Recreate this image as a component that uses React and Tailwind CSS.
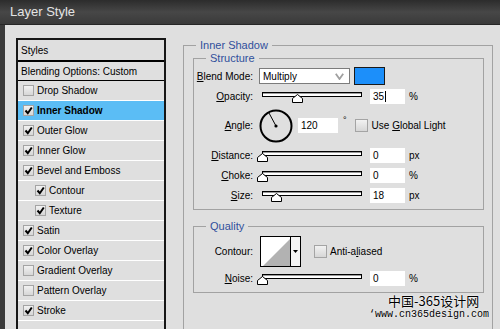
import React from "react";

const styleItems = [
  { label: "Drop Shadow", checked: false },
  { label: "Inner Shadow", checked: true, active: true },
  { label: "Outer Glow", checked: true },
  { label: "Inner Glow", checked: true },
  { label: "Bevel and Emboss", checked: true },
  { label: "Contour", checked: true, nested: true },
  { label: "Texture", checked: true, nested: true },
  { label: "Satin", checked: true },
  { label: "Color Overlay", checked: true },
  { label: "Gradient Overlay", checked: false },
  { label: "Pattern Overlay", checked: false },
  { label: "Stroke", checked: true },
];

const Check = ({ checked, size = "w-[11px] h-[11px]" }) => (
  <div
    className={`${size} shrink-0 border border-[#a4a4a4] bg-linear-to-b from-[#f2f2f2] to-[#d6d6d6] flex items-center justify-center`}
  >
    {checked && (
      <svg width="9" height="9" viewBox="0 0 9 9">
        <path d="M1.5 4.5 L3.8 7.2 L7.8 1.5" fill="none" stroke="#000" strokeWidth="2" />
      </svg>
    )}
  </div>
);

const Thumb = () => (
  <svg width="11" height="9" viewBox="0 0 11 9">
    <polygon points="5.5,0.5 10.5,4.5 10.5,8.5 0.5,8.5 0.5,4.5" fill="#fff" stroke="#000" strokeWidth="1" />
  </svg>
);

// pos = thumb centre, px from track start
function Slider({ pos }) {
  return (
    <div className="relative w-[108px] h-[14px] shrink-0">
      <div className="absolute left-[4px] top-[3px] w-[100px] h-[5px] border border-black bg-white shadow-[inset_0_1px_0_#9a9a9a]" />
      <div className="absolute top-[5px] flex" style={{ left: 4 + pos - 5 }}>
        <Thumb />
      </div>
    </div>
  );
}

const Field = ({ children, w = "w-[35px]", caret }) => (
  <div className={`${w} h-[15px] bg-white pl-[3px] text-[10px] leading-[15px] shrink-0 flex items-center`}>
    {children}
    {caret && <span className="inline-block w-px h-[11px] bg-black ml-[1px]" />}
  </div>
);

const Label = ({ children }) => (
  <div className="w-[59px] shrink-0 text-right text-[10px]">{children}</div>
);

const SliderRow = ({ label, pos, value, unit, caret }) => (
  <div className="flex items-center h-[20px]">
    <Label>{label}</Label>
    <div className="ml-[5px]">
      <Slider pos={pos} />
    </div>
    <div className="ml-[4px]">
      <Field caret={caret}>{value}</Field>
    </div>
    <div className="ml-[4px] text-[10px]">{unit}</div>
  </div>
);

const Legend = ({ children }) => (
  <legend className="ml-[12px] px-[4px] text-[11px] leading-[14px] text-[#30509c]">{children}</legend>
);

export default function App() {
  return (
    <div className="relative w-[500px] h-[329px] overflow-hidden bg-[#dfdfdf] text-black font-['Liberation_Sans',Arial,sans-serif]">
      {/* title bar */}
      <div className="h-[25px] flex items-center pl-[10px] bg-linear-to-b from-[#2c2c2c] via-[#474747] to-[#3a3a3a] border-b border-[#262626] text-[13px] text-[#e4e4e4]">
        Layer Style
      </div>

      <div className="flex h-[304px]">
        <div className="w-[5px] shrink-0 bg-[#3a3a3a]" />

        {/* styles list */}
        <div className="ml-[11px] pt-[13px] shrink-0">
          <div className="w-[150px] h-[300px] border-2 border-b-0 border-[#161616] text-[10px]">
            <div className="h-[22px] border-b-2 border-black pl-[3px] flex items-center">Styles</div>
            <div className="h-[19px] border-b border-black pl-[3px] flex items-center">Blending Options: Custom</div>
            {styleItems.map((it) => (
              <div
                key={it.label}
                className={`h-[20px] border-b border-white flex items-center ${it.active ? "bg-[#5bbdf5] font-bold" : ""} ${it.nested ? "pl-[17px]" : "pl-[5px]"}`}
              >
                <Check checked={it.checked} />
                <span className="ml-[3px]">{it.label}</span>
              </div>
            ))}
          </div>
        </div>

        {/* settings */}
        <div className="ml-[17px] pt-[13px] shrink-0">
          <fieldset className="w-[310px] border border-[#a2a2a2] m-0 p-0 min-w-0">
            <Legend>Inner Shadow</Legend>
            <div className="pl-[9px] pb-[60px]">
              <fieldset className="-mt-px w-[291px] border border-[#a2a2a2] m-0 p-0 min-w-0">
                <Legend>Structure</Legend>
                <div className="pt-[1px] pb-[4px]">
                  <div className="flex items-center h-[20px]">
                    <Label>
                      <u>B</u>lend Mode:
                    </Label>
                    <div className="ml-[6px] w-[91px] h-[16px] bg-white border border-[#7c7c7c] flex items-center justify-between pl-[3px] pr-[5px] text-[10px]">
                      <span>Multiply</span>
                      <svg width="9" height="7" viewBox="0 0 9 7">
                        <polyline points="0.8,0.8 4.5,6 8.2,0.8" fill="none" stroke="#a0a0a0" strokeWidth="1.8" />
                      </svg>
                    </div>
                    <div className="ml-[4px] w-[31px] h-[18px] border border-[#1a1a1a] bg-[#1c8ffa]" />
                  </div>

                  <SliderRow label={<><u>O</u>pacity:</>} pos={35} value="35" unit="%" caret />

                  <div className="flex items-center h-[39px]">
                    <Label>
                      <u>A</u>ngle:
                    </Label>
                    <svg className="ml-[6px] shrink-0" width="34" height="34" viewBox="0 0 34 34">
                      <circle cx="17" cy="17" r="15.5" fill="none" stroke="#000" strokeWidth="2" />
                      <line x1="17" y1="17" x2="10" y2="4" stroke="#000" strokeWidth="1" />
                      <circle cx="17" cy="17" r="1.6" fill="#000" />
                    </svg>
                    <div className="ml-[5px]">
                      <Field w="w-[40px]">120</Field>
                    </div>
                    <div className="ml-[5px] self-start mt-[10px] text-[9px] leading-none">°</div>
                    <div className="ml-[8px]">
                      <Check size="w-[13px] h-[13px]" />
                    </div>
                    <div className="ml-[4px] text-[10px]">
                      Use <u>G</u>lobal Light
                    </div>
                  </div>

                  <SliderRow label={<><u>D</u>istance:</>} pos={0} value="0" unit="px" />
                  <SliderRow label={<><u>C</u>hoke:</>} pos={0} value="0" unit="%" />
                  <SliderRow label={<><u>S</u>ize:</>} pos={14} value="18" unit="px" />
                </div>
              </fieldset>

              <fieldset className="mt-[9px] w-[291px] border border-[#a2a2a2] m-0 p-0 min-w-0">
                <Legend>Quality</Legend>
                <div className="pb-[2px]">
                  <div className="mt-[3px] h-[30px] flex items-center">
                    <Label>Contour:</Label>
                    <div className="ml-[7px] w-[41px] h-[31px] border border-black flex shrink-0">
                      <svg width="29" height="29" viewBox="0 0 29 29" className="bg-white">
                        <polygon points="2,29 29,2 29,29" fill="#b2b2b2" />
                      </svg>
                      <div className="w-[10px] border-l border-black bg-[#f4f4f4] flex items-center justify-center">
                        <svg width="5" height="3" viewBox="0 0 5 3">
                          <polygon points="0,0 5,0 2.5,3" fill="#000" />
                        </svg>
                      </div>
                    </div>
                    <div className="ml-[13px]">
                      <Check size="w-[13px] h-[13px]" />
                    </div>
                    <div className="ml-[3px] text-[10px]">
                      Anti-a<u>l</u>iased
                    </div>
                  </div>
                  <div className="h-[24px] flex items-center">
                    <Label>
                      <u>N</u>oise:
                    </Label>
                    <div className="ml-[5px]">
                      <Slider pos={0} />
                    </div>
                    <div className="ml-[4px]">
                      <Field>0</Field>
                    </div>
                    <div className="ml-[4px] text-[10px]">%</div>
                  </div>
                </div>
              </fieldset>
            </div>
          </fieldset>
        </div>
      </div>

      {/* watermark */}
      <div className="absolute left-[388px] top-[294px] text-[13px] leading-[14px] font-['Noto_Sans_CJK_SC',sans-serif] [text-shadow:0_0_2px_#fff,0_0_1px_#fff]">
        中国-365设计网
      </div>
      <div className="absolute left-[369px] top-[309px] text-[10px] leading-[11px] font-['Liberation_Mono',monospace] [text-shadow:0_0_2px_#fff]">
        ‘www.cn365design.com
      </div>
    </div>
  );
}
